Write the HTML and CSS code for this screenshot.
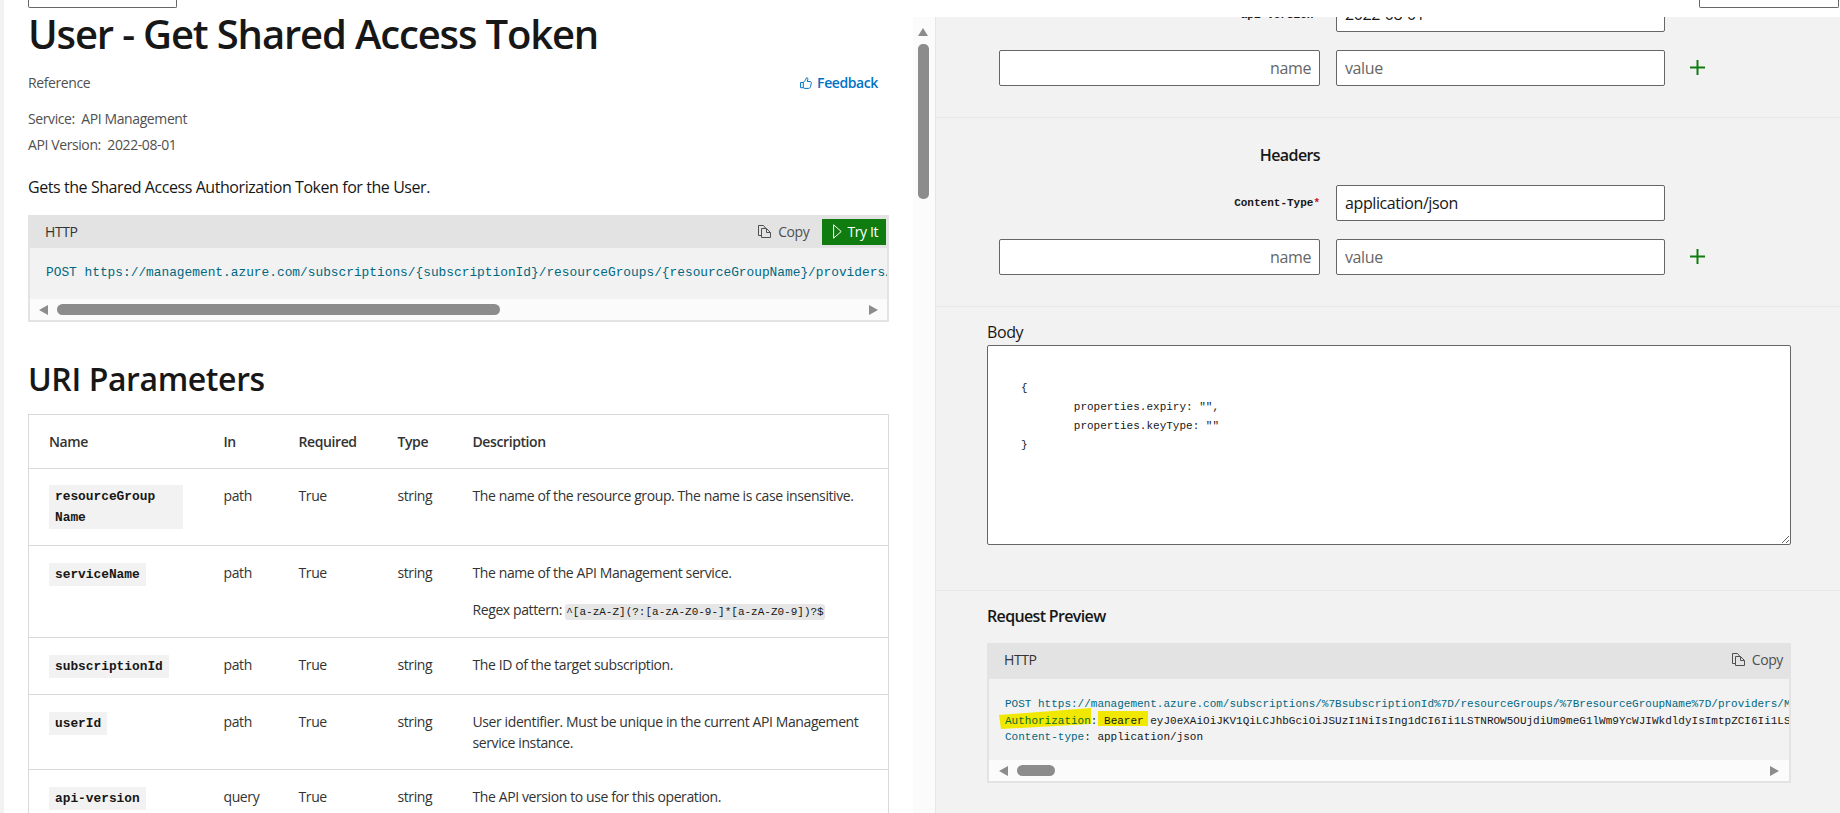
FILE: index.html
```html
<!DOCTYPE html>
<html lang="en">
<head>
    <meta charset="UTF-8">
    <title>User - Get Shared Access Token</title>
    <link rel="stylesheet" href="styles.css">
</head>
<body>
    <div class="docs">
        <div class="top-btn docs-btn"></div>
        <h1>User - Get Shared Access Token</h1>
        <div class="ref-row">
            <span>Reference</span>
            <a class="feedback">
                <svg viewBox="0 0 12 12" class="feedback-icon"><path d="M3.300 5.500L5.500 3c.6-.8.5-1.700 1-2.300.9-.3 1.500.6 1.300 1.700l-.5 2.100H10c1 0 1.500.8 1.300 1.700l-.8 3.500c-.2 1-1 1.700-2 1.700H5c-.7 0-1.200-.3-1.700-.7H.6V5.500zM3.300 5.500v5.200"/></svg>
                Feedback
            </a>
        </div>
        <div class="meta">Service:&nbsp; API Management</div>
        <div class="meta">API Version:&nbsp; 2022-08-01</div>
        <p class="summary">Gets the Shared Access Authorization Token for the User.</p>

        <div class="code-block">
            <div class="code-head">
                <span>HTTP</span>
                <span class="copy">
                    <svg viewBox="0 0 13 13" class="copy-icon"><path d="M3.500 10.500h-3V.5h5l2 2.500M3.500 3.500h5l4 4v5h-9zM8.500 3.500v4h4"/></svg>
                    Copy
                </span>
                <span class="try-btn">
                    <svg viewBox="0 0 9 15" class="try-icon"><path d="M.6.8l7.600 6.700-7.600 6.700z"/></svg>
                    Try It
                </span>
            </div>
            <div class="code-body url-line"><span class="tk">POST https://management.azure.com/subscriptions/{subscriptionId}/resourceGroups/{resourceGroupName}/providers/Microsoft.ApiManagement/service/{serviceName}/users/{userId}/token?api-version=2022-08-01</span></div>
            <div class="scrollbar">
                <span class="arrow-left"></span>
                <span class="thumb thumb-long"></span>
                <span class="arrow-right"></span>
            </div>
        </div>

        <h2>URI Parameters</h2>
        <table class="params">
            <thead>
                <tr><th class="col-name">Name</th><th class="col-in">In</th><th class="col-req">Required</th><th class="col-type">Type</th><th>Description</th></tr>
            </thead>
            <tbody>
                <tr>
                    <td><code class="param wrap">resourceGroup<br>Name</code></td>
                    <td>path</td><td>True</td><td>string</td>
                    <td>The name of the resource group. The name is case insensitive.</td>
                </tr>
                <tr>
                    <td><code class="param">serviceName</code></td>
                    <td>path</td><td>True</td><td>string</td>
                    <td>
                        <p class="desc">The name of the API Management service.</p>
                        <p class="desc regex">Regex pattern: <code class="pattern">^[a-zA-Z](?:[a-zA-Z0-9-]*[a-zA-Z0-9])?$</code></p>
                    </td>
                </tr>
                <tr>
                    <td><code class="param">subscriptionId</code></td>
                    <td>path</td><td>True</td><td>string</td>
                    <td>The ID of the target subscription.</td>
                </tr>
                <tr>
                    <td><code class="param">userId</code></td>
                    <td>path</td><td>True</td><td>string</td>
                    <td>User identifier. Must be unique in the current API Management service instance.</td>
                </tr>
                <tr>
                    <td><code class="param">api-version</code></td>
                    <td>query</td><td>True</td><td>string</td>
                    <td>The API version to use for this operation.</td>
                </tr>
            </tbody>
        </table>
    </div>

    <div class="page-scroll">
        <span class="page-arrow"></span>
        <span class="page-thumb"></span>
    </div>

    <div class="right">
        <div class="top-strip"><div class="top-btn right-btn"></div></div>
        <div class="panel">
            <div class="section section-params">
                <div class="form-row clipped-row">
                    <label class="field-label clipped-label">api-version<span class="req">*</span></label>
                    <input class="field" value="2022-08-01">
                </div>
                <div class="form-row">
                    <input class="field field-name" placeholder="name">
                    <input class="field" placeholder="value">
                    <svg viewBox="0 0 15 15" class="plus"><path d="M7.500 0v15M0 7.500h15"/></svg>
                </div>
            </div>
            <div class="section section-headers">
                <div class="form-title">Headers</div>
                <div class="form-row">
                    <label class="field-label">Content-Type<span class="req">*</span></label>
                    <input class="field" value="application/json">
                </div>
                <div class="form-row">
                    <input class="field field-name" placeholder="name">
                    <input class="field" placeholder="value">
                    <svg viewBox="0 0 15 15" class="plus"><path d="M7.500 0v15M0 7.500h15"/></svg>
                </div>
            </div>
            <div class="section section-body">
                <div class="block-title">Body</div>
                <textarea class="body-input" readonly>{
	properties.expiry: "",
	properties.keyType: ""
}</textarea>
            </div>
            <div class="section section-preview">
                <div class="block-title">Request Preview</div>
                <div class="code-block">
                    <div class="code-head preview-head">
                        <span>HTTP</span>
                        <span class="copy">
                            <svg viewBox="0 0 13 13" class="copy-icon"><path d="M3.500 10.500h-3V.5h5l2 2.500M3.500 3.500h5l4 4v5h-9zM8.500 3.500v4h4"/></svg>
                            Copy
                        </span>
                    </div>
                    <div class="code-body preview-body">
                        <svg class="marker" viewBox="0 0 160 24"><path d="M0 7L92 0v16L2 21z"/><rect x="99" y="3" width="50" height="15"/></svg>
                        <pre class="preview-text"><span class="tk">POST https://management.azure.com/subscriptions/%7BsubscriptionId%7D/resourceGroups/%7BresourceGroupName%7D/providers/Microsoft.ApiManagement/service/%7BserviceName%7D</span>
<span class="tk-marked">Authorization</span>: <span>Bearer</span> eyJ0eXAiOiJKV1QiLCJhbGciOiJSUzI1NiIsIng1dCI6Ii1LSTNROW5OUjdiUm9meG1lWm9YcWJIWkdldyIsImtpZCI6Ii1LSTNROW5OUjdiUm9meG1lWm9YcWJIWkdldyJ9
<span class="tk">Content-type</span>: application/json</pre>
                    </div>
                    <div class="scrollbar scrollbar-small">
                        <span class="arrow-left"></span>
                        <span class="thumb thumb-short"></span>
                        <span class="arrow-right"></span>
                    </div>
                </div>
            </div>
        </div>
    </div>
</body>
</html>
```

FILE: styles.css
```css
* {
    box-sizing: border-box;
}
html, body {
    height: 100%;
}
body {
    margin: 0;
    display: flex;
    overflow: hidden;
    background-color: white;
    color: #171717;
    font-family: "Open Sans", "Noto Sans", sans-serif;
    font-size: 14px;
    line-height: 21px;
    letter-spacing: -0.4px;
}
code, pre, .code-body, .field-label {
    font-family: "Liberation Mono", monospace;
    letter-spacing: 0;
}

/* left column */
.docs {
    width: 913px;
    height: 813px;
    overflow: hidden;
    flex-shrink: 0;
    padding: 0 24px;
    border-left: 4px solid #f2f2f2;
}
.top-btn {
    height: 8px;
    background-color: white;
    border: 1px solid #666;
    border-top: none;
    border-radius: 0 0 2px 2px;
}
.docs-btn {
    width: 149px;
}
h1 {
    margin: 0;
    font-size: 40px;
    line-height: 52px;
    font-weight: 600;
    letter-spacing: -1.15px;
}
.ref-row {
    display: flex;
    justify-content: space-between;
    align-items: center;
    margin-top: 12px;
    padding-right: 11px;
    color: #505050;
}
.feedback {
    display: flex;
    align-items: center;
    gap: 5px;
    color: #0072c6;
    font-weight: 600;
}
.feedback-icon {
    width: 12px;
    height: 12px;
    fill: none;
    stroke: #0072c6;
    stroke-width: 1;
}
.meta {
    margin-top: 5px;
    color: #505050;
}
.ref-row + .meta {
    margin-top: 15px;
}
.summary {
    margin: 20px 0 16px;
    font-size: 16px;
    line-height: 24px;
    letter-spacing: -0.43px;
}

/* code blocks */
.code-block {
    border: 2px solid #e3e3e3;
    border-top: none;
    background-color: #f2f2f2;
}
.code-head {
    display: flex;
    align-items: center;
    height: 33px;
    margin: 0 -2px;
    padding: 0 3px 0 17px;
    background-color: #e3e3e3;
    color: #333;
}
.copy {
    display: flex;
    align-items: center;
    gap: 7px;
    margin-left: auto;
    color: #505050;
}
.copy-icon {
    width: 13px;
    height: 13px;
    fill: none;
    stroke: #505050;
    stroke-width: 1;
}
.try-btn {
    display: flex;
    align-items: center;
    gap: 5px;
    height: 26px;
    margin-left: 13px;
    padding: 0 8px 0 11px;
    background-color: #107c10;
    color: white;
}
.try-icon {
    width: 9px;
    height: 15px;
    fill: none;
    stroke: white;
    stroke-width: 1;
}
.code-body {
    overflow: hidden;
    white-space: nowrap;
    color: #171717;
}
.url-line {
    height: 51px;
    padding: 15px 0 0 16px;
    font-size: 12.830px;
    line-height: 20px;
}
.tk {
    color: #006881;
}
.scrollbar {
    display: flex;
    align-items: center;
    height: 21px;
    padding: 0 9px;
    background-color: #fbfbfb;
}
.arrow-left, .arrow-right {
    width: 0;
    height: 0;
    border-top: 5.500px solid transparent;
    border-bottom: 5.500px solid transparent;
}
.arrow-left {
    border-right: 9px solid #8c8c8c;
}
.arrow-right {
    margin-left: auto;
    border-left: 9px solid #8c8c8c;
}
.thumb {
    height: 11px;
    margin-left: 9px;
    border-radius: 6px;
    background-color: #8c8c8c;
}
.thumb-long {
    width: 443px;
}
.thumb-short {
    width: 38px;
}

/* parameters table */
h2 {
    margin: 36px 0 14px;
    font-size: 32px;
    line-height: 42px;
    font-weight: 600;
    letter-spacing: -0.4px;
}
.params {
    width: 100%;
    border-collapse: collapse;
    border: 1px solid #d9d9d9;
    table-layout: fixed;
    color: #333;
}
.params th, .params td {
    text-align: left;
    vertical-align: top;
    padding: 16px 16px 16px 10px;
    border-bottom: 1px solid #d9d9d9;
    font-weight: 400;
}
.params th {
    font-weight: 600;
}
.params th:first-child, .params td:first-child {
    padding-left: 20px;
}
.col-name {
    width: 185px;
}
.col-in {
    width: 75px;
}
.col-req {
    width: 99px;
}
.col-type {
    width: 75px;
}
.param {
    display: inline-block;
    padding: 1px 6px;
    background-color: #f2f2f2;
    color: #171717;
    font-size: 12.830px;
    font-weight: 700;
}
.param.wrap {
    width: 134px;
}
.desc {
    margin: 0;
}
.regex {
    margin: 16px 0 -2px;
}
.pattern {
    padding: 2px 1px;
    border-radius: 3px;
    background-color: #e6e6e6;
    color: #171717;
    font-size: 11px;
}

/* right column */
.page-scroll {
    width: 22px;
    height: 796px;
    margin-top: 17px;
    flex-shrink: 0;
    background-color: #fbfbfb;
    padding: 0 0 0 5px;
}
.page-arrow {
    display: block;
    width: 0;
    height: 0;
    margin-top: 11px;
    border-left: 5.500px solid transparent;
    border-right: 5.500px solid transparent;
    border-bottom: 8px solid #8c8c8c;
}
.page-thumb {
    display: block;
    width: 11px;
    height: 155px;
    margin-top: 8px;
    border-radius: 5px;
    background-color: #8c8c8c;
}
.right {
    flex: 1;
    min-width: 0;
    display: flex;
    flex-direction: column;
}
.top-strip {
    height: 17px;
    flex-shrink: 0;
    display: flex;
    justify-content: flex-end;
    padding-right: 1px;
}
.right-btn {
    width: 140px;
}
.panel {
    flex: 1;
    overflow: hidden;
    background-color: #f2f2f2;
    border-left: 1px solid #e6e6e6;
}
.section {
    border-bottom: 1px solid #e8e8e8;
}
.section-params, .section-headers {
    padding: 0 0 31px 63px;
}
.section-headers {
    padding-top: 25px;
}
.section-body {
    padding: 13px 49px 45px 51px;
}
.section-preview {
    padding: 13px 49px 0 51px;
    border-bottom: none;
}
.form-row {
    display: flex;
    align-items: center;
    margin-bottom: 18px;
}
.section .form-row:last-child {
    margin-bottom: 0;
}
.clipped-row {
    margin-top: -21px;
    justify-content: flex-end;
    width: 666px;
}
.form-title {
    width: 321px;
    margin-bottom: 18px;
    text-align: right;
    font-size: 16px;
    line-height: 24px;
    font-weight: 600;
    letter-spacing: -0.6px;
}
.section-headers .form-row:nth-child(2) {
    width: 666px;
}
.field-label {
    width: 321px;
    flex-shrink: 0;
    text-align: right;
    font-size: 11px;
    font-weight: 700;
}
.clipped-label {
    padding-top: 2px;
}
.req {
    color: #c50f1f;
}
.clipped-label .req {
    visibility: hidden;
}
.field {
    width: 329px;
    height: 36px;
    margin-left: 16px;
    padding: 0 8px;
    border: 1px solid #666;
    border-radius: 2px;
    background-color: white;
    color: #171717;
    font-family: inherit;
    font-size: 16px;
    letter-spacing: -0.4px;
}
.field::placeholder {
    color: #666;
}
.field-name {
    width: 321px;
    margin-left: 0;
    text-align: right;
}
.plus {
    width: 15px;
    height: 15px;
    margin: 0 0 2px 25px;
    fill: none;
    stroke: #107c10;
    stroke-width: 2;
}
.block-title {
    margin-bottom: 1px;
    font-size: 16px;
    line-height: 24px;
    font-weight: 600;
    letter-spacing: -0.65px;
}
.section-body .block-title {
    font-weight: 400;
    letter-spacing: -0.4px;
}
.body-input {
    display: block;
    width: 804px;
    height: 200px;
    padding: 33px 33px 0;
    border: 1px solid #666;
    border-radius: 2px;
    background-color: white;
    color: #171717;
    font-family: "Liberation Mono", monospace;
    font-size: 11px;
    line-height: 19px;
    letter-spacing: 0;
    tab-size: 8;
    outline: none;
}
.section-preview .code-block {
    margin-top: 15px;
}
.preview-head {
    height: 36px;
    padding-right: 8px;
    padding-bottom: 3px;
}
.preview-body {
    position: relative;
    height: 81px;
    padding: 17px 0 0 16px;
}
.preview-text {
    position: relative;
    margin: 0;
    font-size: 11px;
    line-height: 16.500px;
}
.tk-marked {
    color: #0a6b2d;
}
.marker {
    position: absolute;
    left: 10px;
    top: 29px;
    width: 160px;
    height: 24px;
    fill: #f0e800;
}
.scrollbar-small {
    padding: 0 10px;
}
```
